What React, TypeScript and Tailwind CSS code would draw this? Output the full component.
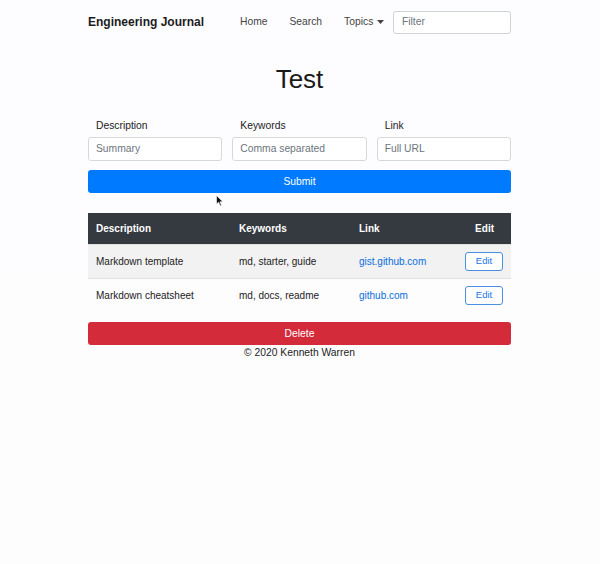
import React from "react";

export default function App() {
  const rows = [
    { d: "Markdown template", k: "md, starter, guide", l: "gist.github.com", striped: true },
    { d: "Markdown cheatsheet", k: "md, docs, readme", l: "github.com", striped: false },
  ];
  return (
    <div className="relative w-[600px] h-[564px] bg-gradient-to-b from-[#fdfcff] to-[#fdfdfd] text-[#212529] font-['Liberation_Sans',Arial,sans-serif]">
      <div className="ml-[88px] w-[423px]">
        {/* navbar */}
        <nav className="h-[44px] flex items-center">
          <span className="shrink-0 whitespace-nowrap w-[152px] text-[12px] font-bold text-[#1c1c1c]">Engineering Journal</span>
          <div className="shrink-0 whitespace-nowrap flex items-center text-[10.3px] text-[#444]">
            <span>Home</span>
            <span className="ml-[22px]">Search</span>
            <span className="ml-[22px] flex items-center">
              Topics
              <svg className="ml-[4px]" width="7" height="4" viewBox="0 0 7 4"><path d="M0 0h7L3.5 4z" fill="#444" /></svg>
            </span>
          </div>
          <div className="ml-auto shrink-0 w-[118px] h-[23px] border border-[#ced4da] rounded-[3px] bg-white flex items-center px-[8px] text-[10.3px] text-[#6c757d]">
            Filter
          </div>
        </nav>
        <h1 className="mt-[20px] text-center text-[26px] leading-[30px] text-[#1a1a1a]">Test</h1>
        <div className="mt-[25px] grid grid-cols-3 gap-[10px]">
          {[
            ["Description", "Summary"],
            ["Keywords", "Comma separated"],
            ["Link", "Full URL"],
          ].map(([lab, ph]) => (
            <div key={lab} className="flex flex-col">
              <label className="pl-[8px] h-[13px] text-[10.3px] leading-[13px] text-[#222]">{lab}</label>
              <div className="mt-[5px] h-[24px] border border-[#d6d9dc] rounded-[3px] bg-white flex items-center px-[7px] text-[10.3px] text-[#6c757d]">
                {ph}
              </div>
            </div>
          ))}
        </div>
        <button className="mt-[9px] w-full h-[23px] bg-[#007bff] rounded-[3px] text-white text-[10.3px]">Submit</button>
        <table className="mt-[20px] w-full border-collapse text-[10px]">
          <thead>
            <tr className="bg-[#343a40] text-white h-[31px]">
              <th className="text-left font-bold pl-[8px] w-[151px]">Description</th>
              <th className="text-left font-bold w-[120px]">Keywords</th>
              <th className="text-left font-bold">Link</th>
              <th className="text-right font-bold pr-[17px]">Edit</th>
            </tr>
          </thead>
          <tbody>
            {rows.map((r) => (
              <tr key={r.d} className={(r.striped ? "bg-[#f2f2f2] " : "") + "h-[34px] border-t border-[#dee2e6]"}>
                <td className="pl-[8px] text-[#222]">{r.d}</td>
                <td className="text-[#222]">{r.k}</td>
                <td className="text-[#0a6ee0]">{r.l}</td>
                <td className="pr-[8px]">
                  <div className="ml-auto w-[38px] h-[19px] border border-[#4a90e2] rounded-[3px] bg-white flex items-center justify-center text-[9.5px] text-[#1a73e8]">
                    Edit
                  </div>
                </td>
              </tr>
            ))}
          </tbody>
        </table>
        <button className="mt-[10px] w-full h-[23px] bg-[#d42b3a] rounded-[3px] text-white text-[10.3px]">Delete</button>
        <div className="mt-[1px] text-center text-[10.3px] leading-[14px] text-[#222]">© 2020 Kenneth Warren</div>
      </div>
      <svg className="absolute left-[216px] top-[195px]" width="8" height="12" viewBox="0 0 8 12">
        <path d="M0.5 0.5 L0.5 9 L2.6 7.2 L4.2 10.8 L5.4 10.2 L3.9 6.8 L6.8 6.8 Z" fill="#111" stroke="#fff" strokeWidth="0.6" />
      </svg>
    </div>
  );
}
